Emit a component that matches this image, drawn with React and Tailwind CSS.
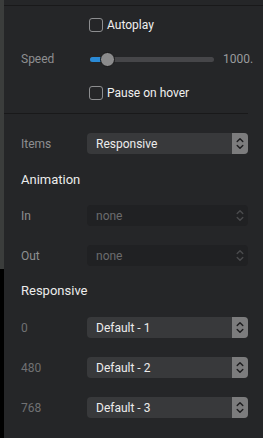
import React from 'react'

const FONT = { fontFamily: 'Roboto, "Liberation Sans", sans-serif' }

function Stepper({ dim }) {
  return (
    <div className={`w-[16px] h-full flex items-center justify-center rounded-r-[4px] ${dim ? 'bg-transparent' : 'bg-[#7c7c7d]'}`}>
      <svg width="8" height="13" viewBox="0 0 8 13" fill="none"
        stroke={dim ? '#4a4b4d' : '#1c1c1e'} strokeWidth="1.4" strokeLinecap="round" strokeLinejoin="round">
        <path d="M1.2 4.6 L4 1.8 L6.8 4.6" />
        <path d="M1.2 8.4 L4 11.2 L6.8 8.4" />
      </svg>
    </div>
  )
}

function Select({ value, dim }) {
  return (
    <div className={`w-[161px] h-[21px] flex items-center rounded-[4px] ${dim ? 'bg-[#202123]' : 'bg-[#38393b]'}`}>
      <span className={`flex-1 pl-[9px] text-[12px] leading-none ${dim ? 'text-[#6b6c6e]' : 'text-[#ececec]'}`}>{value}</span>
      <Stepper dim={dim} />
    </div>
  )
}

function Row({ label, labelColor = 'text-[#8e8f91]', children, className = '' }) {
  return (
    <div className={`flex items-center ${className}`}>
      <span className={`w-[66px] text-[12px] leading-none ${labelColor}`}>{label}</span>
      {children}
    </div>
  )
}

function Check({ label }) {
  return (
    <div className="flex items-center pl-[2px]">
      <div className="w-[14px] h-[14px] rounded-[3px] border border-[#8d8e90]" />
      <span className="ml-[4px] text-[12px] leading-none text-[#f0f0f0]">{label}</span>
    </div>
  )
}

export default function App() {
  return (
    <div className="w-[263px] h-[438px] flex overflow-hidden bg-[#252628]" style={FONT}>
      {/* left gutter */}
      <div className="w-[4px] flex flex-col">
        <div className="h-[269px] bg-[#3b3d3c]" />
        <div className="flex-1 bg-black" />
      </div>

      <div className="flex-1 flex flex-col pl-[17px]">
        <div className="h-[5px] -ml-[17px]" />
        <div className="h-px -ml-[17px] bg-[#19191a]" />

        <Row label="" className="h-[25px] mt-[6px]">
          <Check label="Autoplay" />
        </Row>

        <Row label="Speed" className="h-[24px] mt-[10px]">
          <div className="relative w-[124px] h-[15px] ml-[3px] flex items-center">
            <div className="w-full h-[5px] rounded-full bg-[#464649]" />
            <div className="absolute left-0 w-[12px] h-[5px] rounded-l-full bg-[#2a8ad6]" />
            <div className="absolute left-[10px] w-[15px] h-[15px] rounded-full bg-[#8b8b8c] border border-[#151516]" />
          </div>
          <span className="ml-[9px] text-[12px] leading-none text-[#9a9b9d] whitespace-nowrap">1000.</span>
        </Row>

        <Row label="" className="h-[25px] mt-[9px]">
          <Check label="Pause on hover" />
        </Row>

        <div className="h-px mt-[8px] -ml-[17px] w-[244px] bg-[#19191a]" />

        <Row label="Items" className="mt-[19px]">
          <Select value="Responsive" />
        </Row>

        <div className="mt-[18px] h-[16px] flex items-center text-[13px] text-[#ececec]">Animation</div>

        <Row label="In" className="mt-[17px]">
          <Select value="none" dim />
        </Row>
        <Row label="Out" className="mt-[19px]">
          <Select value="none" dim />
        </Row>

        <div className="mt-[17px] h-[16px] flex items-center text-[13px] text-[#ececec]">Responsive</div>

        <Row label="0" labelColor="text-[#707173]" className="mt-[18px]">
          <Select value="Default - 1" />
        </Row>
        <Row label="480" labelColor="text-[#707173]" className="mt-[19px]">
          <Select value="Default - 2" />
        </Row>
        <Row label="768" labelColor="text-[#707173]" className="mt-[19px]">
          <Select value="Default - 3" />
        </Row>
      </div>
    </div>
  )
}
